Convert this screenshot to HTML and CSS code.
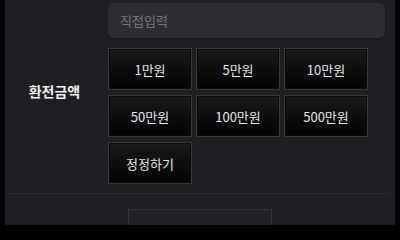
FILE: index.html
```html
<!DOCTYPE html>
<html lang="ko">
<head>
<meta charset="utf-8">
<link rel="stylesheet" href="styles.css">
</head>
<body>
<div class="panel">
  <div class="row">
    <div class="label">환전금액</div>
    <div class="content">
      <div class="input">직접입력</div>
      <div class="grid">
        <div class="btn">1만원</div>
        <div class="btn">5만원</div>
        <div class="btn">10만원</div>
        <div class="btn">50만원</div>
        <div class="btn">100만원</div>
        <div class="btn">500만원</div>
        <div class="btn">정정하기</div>
      </div>
    </div>
  </div>
  <div class="footer">
    <div class="submit"></div>
  </div>
</div>
</body>
</html>
```
FILE: styles.css
```css
html, body {
  margin: 0;
  padding: 0;
  background: #000;
  width: 400px;
  height: 225px;
  overflow: hidden;
  font-family: "Noto Sans CJK KR", "Noto Sans", sans-serif;
}
.panel {
  margin-left: 5px;
  width: 390px;
  height: 225px;
  background: #1f1f23;
}
.row {
  display: flex;
  align-items: center;
  margin: 0 4px 0 3px;
  padding: 3px 0 9px;
  border-bottom: 1px solid #2a2a2e;
}
.label {
  width: 93px;
  margin-bottom: 6px;
  text-align: center;
  color: #f2f2f2;
  font-weight: bold;
  font-size: 14px;
}
.content {
  margin-left: 7px;
  display: flex;
  flex-direction: column;
}
.input {
  width: 265px;
  height: 35px;
  padding-left: 12px;
  box-sizing: content-box;
  background: #2d2d31;
  border-radius: 5px;
  color: #78787c;
  font-size: 13px;
  line-height: 36px;
  box-shadow: 0 1px 2px rgba(0,0,0,0.35);
}
.grid {
  margin-top: 10px;
  display: grid;
  grid-template-columns: repeat(3, 84px);
  grid-auto-rows: 42px;
  column-gap: 4px;
  row-gap: 5px;
}
.btn {
  box-sizing: border-box;
  border: 1px solid #3a3a3e;
  background: linear-gradient(#191919, #020202);
  box-shadow: inset 0 0 0 1px #0a0a0a;
  color: #e6e6e6;
  font-size: 13px;
  display: flex;
  align-items: center;
  justify-content: center;
}
.footer {
  display: flex;
  justify-content: center;
  padding-top: 15px;
}
.submit {
  width: 144px;
  height: 40px;
  box-sizing: border-box;
  border: 1px solid #36363a;
  background: #212125;
}
```
